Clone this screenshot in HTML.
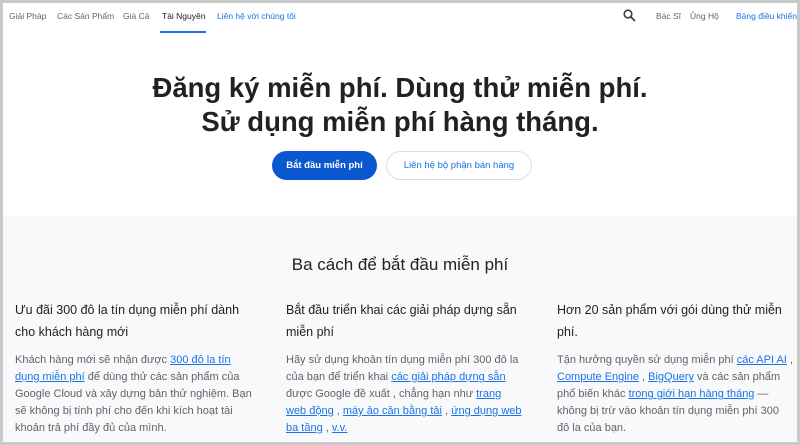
<!DOCTYPE html>
<html><head><meta charset="utf-8"><style>
*{margin:0;padding:0;box-sizing:border-box}
html,body{width:800px;height:445px;overflow:hidden;background:#fff}
body{font-family:"Liberation Sans",sans-serif;position:relative}
.frame{position:absolute;inset:0;border:3px solid #c9c9c9}
.nav{position:absolute;top:11px;font-size:8.5px;color:#5f6368;white-space:nowrap}
.ul{position:absolute;left:160px;top:31px;width:46px;height:2px;background:#1a73e8}
.gray{position:absolute;left:3px;right:3px;top:216px;bottom:3px;background:#f8f9fa}
h1{position:absolute;left:0;width:800px;top:71px;text-align:center;font-size:27.5px;line-height:34px;font-weight:bold;color:#202124}
.b1{position:absolute;left:272px;top:151px;width:105px;height:29px;border-radius:15px;background:#0b57d0;color:#fff;font-size:9.5px;font-weight:bold;text-align:center;line-height:29px}
.b2{position:absolute;left:386px;top:151px;width:146px;height:29px;border-radius:15px;border:1px solid #dadce0;color:#1a73e8;font-size:9.5px;text-align:center;line-height:27px;background:#fff}
h2{position:absolute;left:0;width:800px;top:255px;text-align:center;font-size:17px;font-weight:normal;color:#202124}
.col{position:absolute;top:299px;white-space:nowrap}
.col h3{font-size:12.5px;font-weight:normal;color:#202124;line-height:22px}
.col p{margin-top:9px;font-size:11px;line-height:17px;color:#5f6368}
a{color:#1a73e8;text-decoration:underline}
</style></head><body>
<div class="gray"></div>
<span class="nav" style="left:9px">Giải Pháp</span>
<span class="nav" style="left:57px">Các Sản Phẩm</span>
<span class="nav" style="left:123px">Giá Cả</span>
<span class="nav" style="left:162px;color:#202124">Tài Nguyên</span>
<span class="nav" style="left:217px;color:#1a73e8">Liên hệ với chúng tôi</span>
<div class="ul"></div>
<svg style="position:absolute;left:623px;top:9px" width="13" height="13" viewBox="0 0 13 13"><circle cx="5" cy="5" r="3.8" fill="none" stroke="#3c4043" stroke-width="1.6"/><path d="M8 8l4 4" stroke="#3c4043" stroke-width="1.8"/></svg>
<span class="nav" style="left:656px">Bác Sĩ</span>
<span class="nav" style="left:690px">Ủng Hộ</span>
<span class="nav" style="left:736px;color:#1a73e8">Bảng điều khiển</span>
<h1>Đăng ký miễn phí. Dùng thử miễn phí.<br>Sử dụng miễn phí hàng tháng.</h1>
<div class="b1">Bắt đầu miễn phí</div>
<div class="b2">Liên hệ bộ phận bán hàng</div>
<h2>Ba cách để bắt đầu miễn phí</h2>
<div class="col" style="left:15px"><h3>Ưu đãi 300 đô la tín dụng miễn phí dành<br>cho khách hàng mới</h3>
<p>Khách hàng mới sẽ nhận được <a>300 đô la tín</a><br><a>dụng miễn phí</a> để dùng thử các sản phẩm của<br>Google Cloud và xây dựng bản thử nghiệm. Bạn<br>sẽ không bị tính phí cho đến khi kích hoạt tài<br>khoản trả phí đầy đủ của mình.</p></div>
<div class="col" style="left:286px"><h3>Bắt đầu triển khai các giải pháp dựng sẵn<br>miễn phí</h3>
<p>Hãy sử dụng khoản tín dụng miễn phí 300 đô la<br>của bạn để triển khai <a>các giải pháp dựng sẵn</a><br>được Google đề xuất , chẳng hạn như <a>trang</a><br><a>web động</a> , <a>máy ảo cân bằng tải</a> , <a>ứng dụng web</a><br><a>ba tầng</a> , <a>v.v.</a></p></div>
<div class="col" style="left:557px"><h3>Hơn 20 sản phẩm với gói dùng thử miễn<br>phí.</h3>
<p>Tận hưởng quyền sử dụng miễn phí <a>các API AI</a> ,<br><a>Compute Engine</a> , <a>BigQuery</a> và các sản phẩm<br>phổ biến khác <a>trong giới hạn hàng tháng</a> —<br>không bị trừ vào khoản tín dụng miễn phí 300<br>đô la của bạn.</p></div>
<div class="frame"></div>
</body></html>
